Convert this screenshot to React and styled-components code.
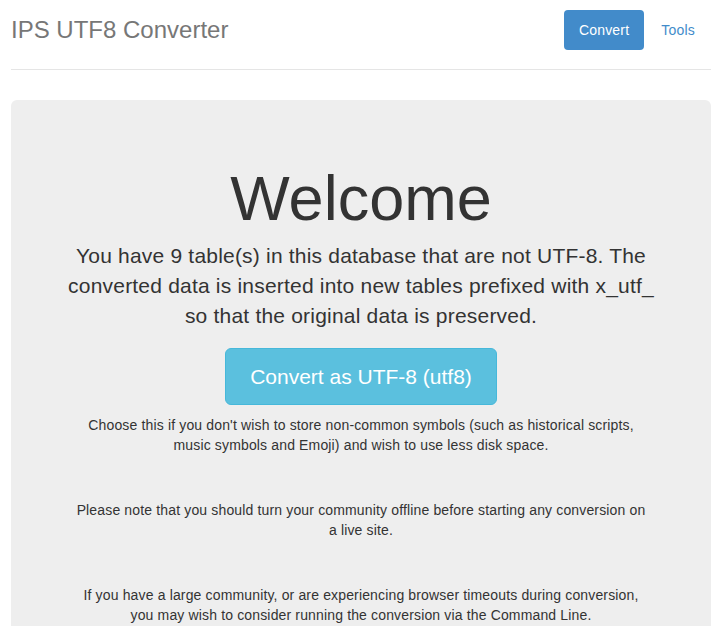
import styled, { createGlobalStyle } from "styled-components";

const GlobalStyle = createGlobalStyle`
  body {
    margin: 0;
    background: #fff;
    font-family: "Liberation Sans", Arial, sans-serif;
    font-size: 14px;
    line-height: 1.428571;
    color: #333;
  }
`;

const Page = styled.div`
  padding: 10px 12px 20px 11px;
`;

const Header = styled.header`
  display: flex;
  align-items: center;
  justify-content: space-between;
  padding-bottom: 19px;
  border-bottom: 1px solid #e5e5e5;
`;

const Brand = styled.h3`
  margin: 0;
  font-size: 24px;
  font-weight: 500;
  line-height: 40px;
  color: #777;
`;

const Pills = styled.ul`
  display: flex;
  gap: 2px;
  margin: 0 1px 0 0;
  padding: 0;
  list-style: none;
`;

const Pill = styled.a`
  display: block;
  padding: 10px 15px;
  border-radius: 4px;
  line-height: 20px;
  letter-spacing: 0.2px;
  text-decoration: none;
  color: ${(p) => (p.$active ? "#fff" : "#428bca")};
  background: ${(p) => (p.$active ? "#428bca" : "transparent")};
`;

const Jumbotron = styled.section`
  margin-top: 30px;
  padding: 44px 60px 40px;
  background: #eee;
  border-radius: 6px;
  text-align: center;
`;

const Title = styled.h1`
  margin: 20px 0 8px;
  font-size: 63px;
  font-weight: 500;
  line-height: 1.1;
  color: #333;
`;

const Lead = styled.p`
  margin: 0 -8px 17px;
  font-size: 21px;
  line-height: 30px;
  letter-spacing: 0.2px;
`;

const ConvertButton = styled.button`
  display: inline-block;
  margin-bottom: 10px;
  padding: 14px 24px 13px;
  font-family: inherit;
  font-size: 21px;
  line-height: 28px;
  color: #fff;
  background: #5bc0de;
  border: 1px solid #46b8da;
  border-radius: 6px;
  cursor: pointer;
`;

const Note = styled.p`
  margin: 0 0 ${(p) => p.$gap || 0}px;
  font-size: 14px;
  line-height: 20px;
  letter-spacing: 0.15px;
`;

export default function App() {
  return (
    <>
      <GlobalStyle />
      <Page>
        <Header>
          <Brand>IPS UTF8 Converter</Brand>
          <Pills>
            <li>
              <Pill href="#" $active>
                Convert
              </Pill>
            </li>
            <li>
              <Pill href="#">Tools</Pill>
            </li>
          </Pills>
        </Header>
        <Jumbotron>
          <Title>Welcome</Title>
          <Lead>
            You have 9 table(s) in this database that are not UTF-8. The
            converted data is inserted into new tables prefixed with x_utf_ so
            that the original data is preserved.
          </Lead>
          <ConvertButton>Convert as UTF-8 (utf8)</ConvertButton>
          <Note $gap={45}>
            Choose this if you don't wish to store non-common symbols (such as
            historical scripts, music symbols and Emoji) and wish to use less
            disk space.
          </Note>
          <Note $gap={45}>
            Please note that you should turn your community offline before
            starting any conversion on a live site.
          </Note>
          <Note>
            If you have a large community, or are experiencing browser timeouts
            during conversion, you may wish to consider running the conversion
            via the Command Line.
          </Note>
        </Jumbotron>
      </Page>
    </>
  );
}
